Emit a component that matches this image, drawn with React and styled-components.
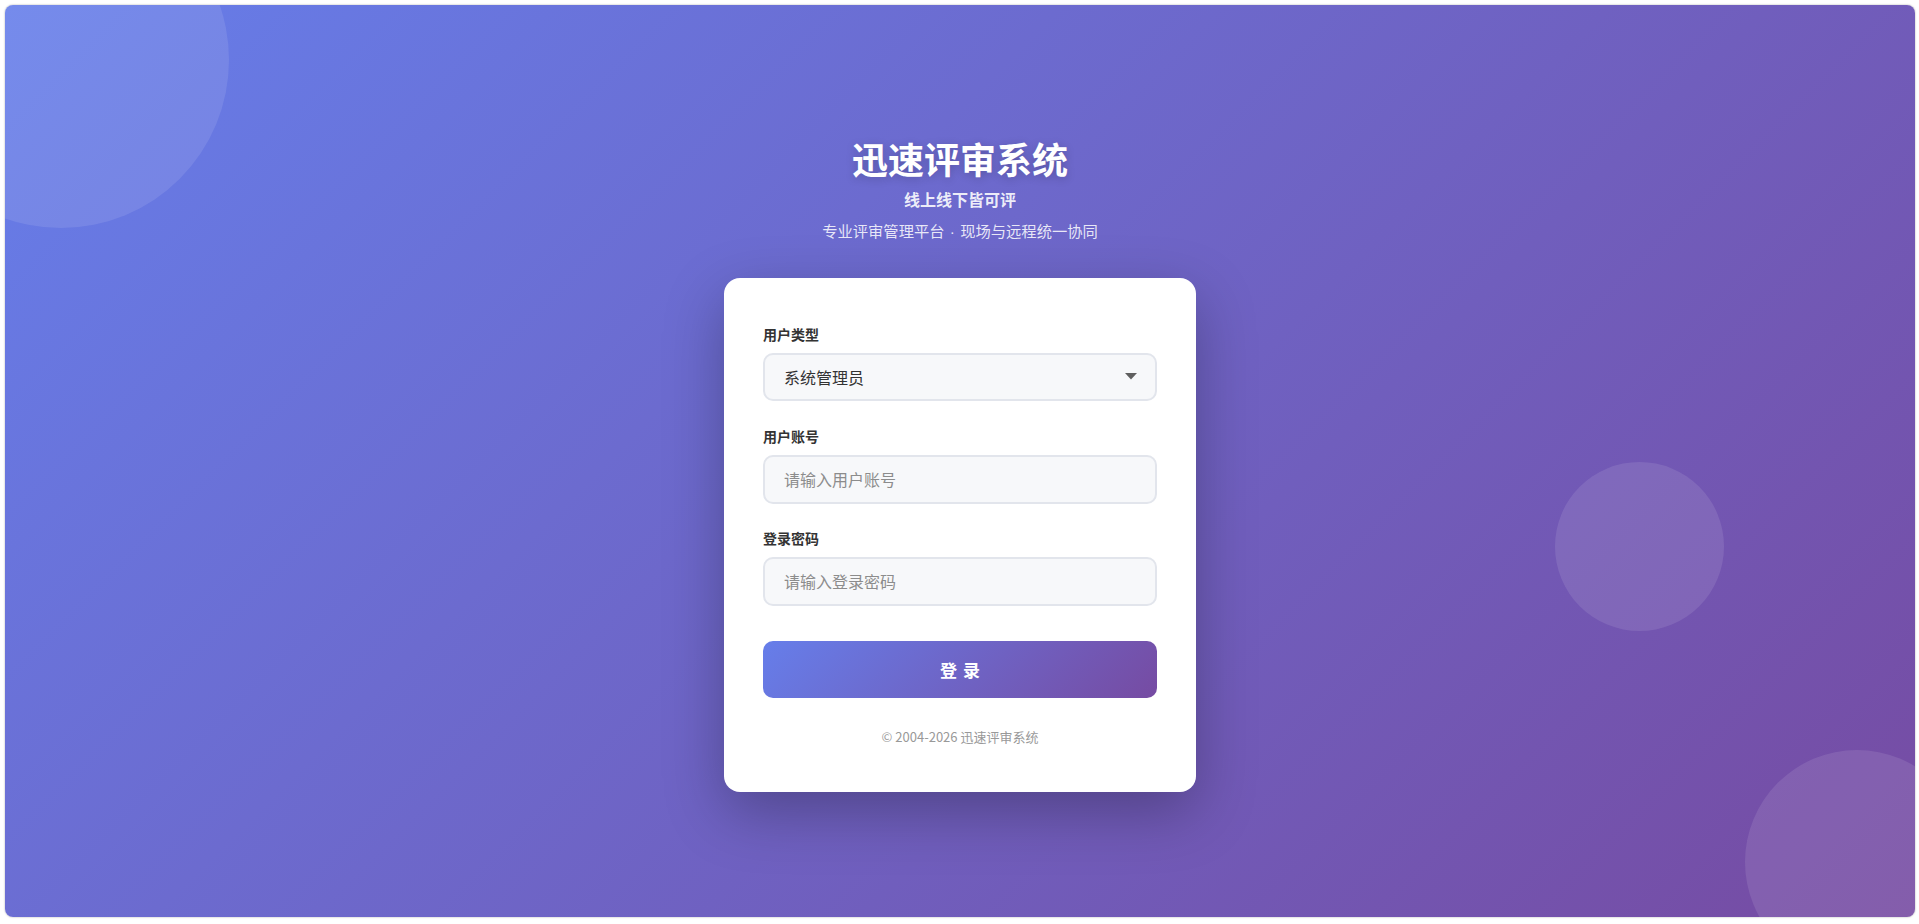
import React, { useState } from 'react';
import styled, { createGlobalStyle } from 'styled-components';

const GlobalStyle = createGlobalStyle`
  html, body {
    margin: 0;
    padding: 0;
    height: 100%;
    background: #fff;
  }
  * {
    box-sizing: border-box;
  }
  body {
    font-family: "Noto Sans CJK SC", "Noto Sans", "Liberation Sans", sans-serif;
  }
`;

const Frame = styled.div`
  height: 100vh;
  padding: 5px 4px 7px 5px;
  display: flex;
`;

const Page = styled.div`
  position: relative;
  flex: 1;
  display: flex;
  flex-direction: column;
  align-items: center;
  justify-content: center;
  overflow: hidden;
  border-radius: 8px;
  background: linear-gradient(135deg, #667eea 0%, #764ba2 100%);
  box-shadow: 0 0 2px rgba(0, 0, 0, 0.35);
`;

const Bubble = styled.div`
  position: absolute;
  border-radius: 50%;
  background: rgba(255, 255, 255, 0.1);
  width: ${(p) => p.size}px;
  height: ${(p) => p.size}px;
  left: ${(p) => p.x - p.size / 2}px;
  top: ${(p) => p.y - p.size / 2}px;
`;

const Header = styled.div`
  position: relative;
  z-index: 1;
  display: flex;
  flex-direction: column;
  align-items: center;
  color: #fff;
  margin-top: 5px;
  margin-bottom: 35px;
`;

const Title = styled.h1`
  margin: 0;
  font-size: 36px;
  line-height: 44px;
  font-weight: 700;
  text-shadow: 0 2px 10px rgba(0, 0, 0, 0.2);
`;

const Subtitle = styled.div`
  margin-top: 8px;
  font-size: 16px;
  line-height: 22px;
  font-weight: 700;
  color: rgba(255, 255, 255, 0.9);
`;

const Tagline = styled.div`
  margin-top: 9px;
  font-size: 15.3px;
  line-height: 22px;
  color: rgba(255, 255, 255, 0.85);
`;

const Dot = styled.span`
  font-family: "Liberation Sans", sans-serif;
  margin: 0 1px;
`;

const Card = styled.div`
  position: relative;
  z-index: 1;
  width: 472px;
  padding: 46px 39px 46px 39px;
  background: #fff;
  border-radius: 16px;
  box-shadow: 0 20px 60px rgba(0, 0, 0, 0.28);
`;

const Field = styled.div`
  display: flex;
  flex-direction: column;
  margin-bottom: ${(p) => p.gap}px;
`;

const Label = styled.label`
  font-size: 14px;
  line-height: 20px;
  font-weight: 700;
  color: #333;
  margin-bottom: 9px;
`;

const SelectWrap = styled.div`
  position: relative;
`;

const Select = styled.select`
  width: 100%;
  height: 48px;
  padding: 0 40px 0 19px;
  border: 2px solid #e2e5ec;
  border-radius: 10px;
  background: #f7f8fa;
  font-family: inherit;
  font-size: 16px;
  color: #333;
  appearance: none;
  outline: none;
`;

const Arrow = styled.svg`
  position: absolute;
  right: 20px;
  top: 20px;
  pointer-events: none;
`;

const Input = styled.input`
  width: 100%;
  height: 49px;
  padding: 0 19px;
  border: 2px solid #e2e5ec;
  border-radius: 10px;
  background: #f7f8fa;
  font-family: inherit;
  font-size: 16px;
  color: #333;
  outline: none;

  &::placeholder {
    color: #8c8c8c;
  }
`;

const Button = styled.button`
  width: 100%;
  height: 57px;
  margin-top: 11px;
  border: none;
  border-radius: 10px;
  background: linear-gradient(135deg, #667eea 0%, #764ba2 100%);
  color: #fff;
  font-family: inherit;
  font-size: 17px;
  font-weight: 700;
  letter-spacing: 6px;
  text-indent: 6px;
  cursor: pointer;
`;

const Footer = styled.div`
  margin-top: 30px;
  text-align: center;
  font-size: 13px;
  line-height: 18px;
  color: #999;
`;

const App = () => {
  const [role, setRole] = useState('admin');
  const [account, setAccount] = useState('');
  const [password, setPassword] = useState('');

  const handleSubmit = (e) => {
    e.preventDefault();
  };

  return (
    <>
      <GlobalStyle />
      <Frame>
        <Page>
          <Bubble size={336} x={56} y={55} />
          <Bubble size={169} x={1634} y={541} />
          <Bubble size={224} x={1852} y={857} />

          <Header>
            <Title>迅速评审系统</Title>
            <Subtitle>线上线下皆可评</Subtitle>
            <Tagline>
              专业评审管理平台<Dot> · </Dot>现场与远程统一协同
            </Tagline>
          </Header>

          <Card as="form" onSubmit={handleSubmit}>
            <Field gap={25}>
              <Label>用户类型</Label>
              <SelectWrap>
                <Select value={role} onChange={(e) => setRole(e.target.value)}>
                  <option value="admin">系统管理员</option>
                  <option value="expert">评审专家</option>
                  <option value="unit">申报单位</option>
                </Select>
                <Arrow width="12" height="7" viewBox="0 0 12 7">
                  <path d="M0 0 L12 0 L6 6.5 Z" fill="#5f5f5f" />
                </Arrow>
              </SelectWrap>
            </Field>
            <Field gap={24}>
              <Label>用户账号</Label>
              <Input
                type="text"
                placeholder="请输入用户账号"
                value={account}
                onChange={(e) => setAccount(e.target.value)}
              />
            </Field>
            <Field gap={24}>
              <Label>登录密码</Label>
              <Input
                type="password"
                placeholder="请输入登录密码"
                value={password}
                onChange={(e) => setPassword(e.target.value)}
              />
            </Field>
            <Button type="submit">登录</Button>
            <Footer>© 2004-2026 迅速评审系统</Footer>
          </Card>
        </Page>
      </Frame>
    </>
  );
};

export default App;
